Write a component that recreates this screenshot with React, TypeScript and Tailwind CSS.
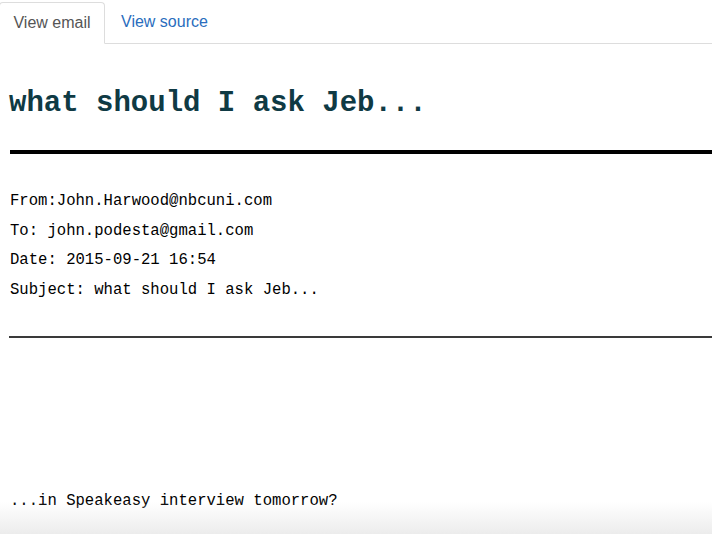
export default function App() {
  const headers = [
    "From:John.Harwood@nbcuni.com",
    "To: john.podesta@gmail.com",
    "Date: 2015-09-21 16:54",
    "Subject: what should I ask Jeb...",
  ];

  return (
    <div className="relative h-[534px] w-[712px] overflow-hidden bg-white">
      {/* tabs */}
      <div className="flex h-[44px] items-end border-b border-[#dddddd] font-['Liberation_Sans',Arial,sans-serif] text-[16px]">
        <div className="-mb-px ml-[-1px] flex h-[42px] w-[106px] items-center justify-center rounded-t-[4px] border border-[#dddddd] border-b-white bg-white text-[#555555]">
          View email
        </div>
        <div className="flex h-[42px] items-center px-[16px] text-[#2a6dbd]">
          View source
        </div>
      </div>

      {/* subject heading */}
      <h1 className="ml-[9px] mt-[42px] font-['Liberation_Mono','Courier_New',monospace] text-[29px] font-bold leading-[36px] text-[#0f3a44]">
        what should I ask Jeb...
      </h1>

      <div className="ml-[10px] mt-[28px] h-[4px] bg-black" />

      {/* headers */}
      <div className="ml-[10px] mt-[33px] font-['Liberation_Mono','Courier_New',monospace] text-[15.6px] leading-[29.5px] text-black">
        {headers.map((h) => (
          <div key={h}>{h}</div>
        ))}
      </div>

      <div className="ml-[9px] mt-[31px] h-[2px] bg-[#3a3a3a]" />

      {/* body */}
      <p className="ml-[10px] mt-[149px] font-['Liberation_Mono','Courier_New',monospace] text-[15.6px] leading-[29.5px] text-black">
        ...in Speakeasy interview tomorrow?
      </p>

      {/* bottom fade */}
      <div className="pointer-events-none absolute inset-x-0 bottom-0 h-[32px] bg-gradient-to-b from-white/0 to-[#ececec]" />
    </div>
  );
}
